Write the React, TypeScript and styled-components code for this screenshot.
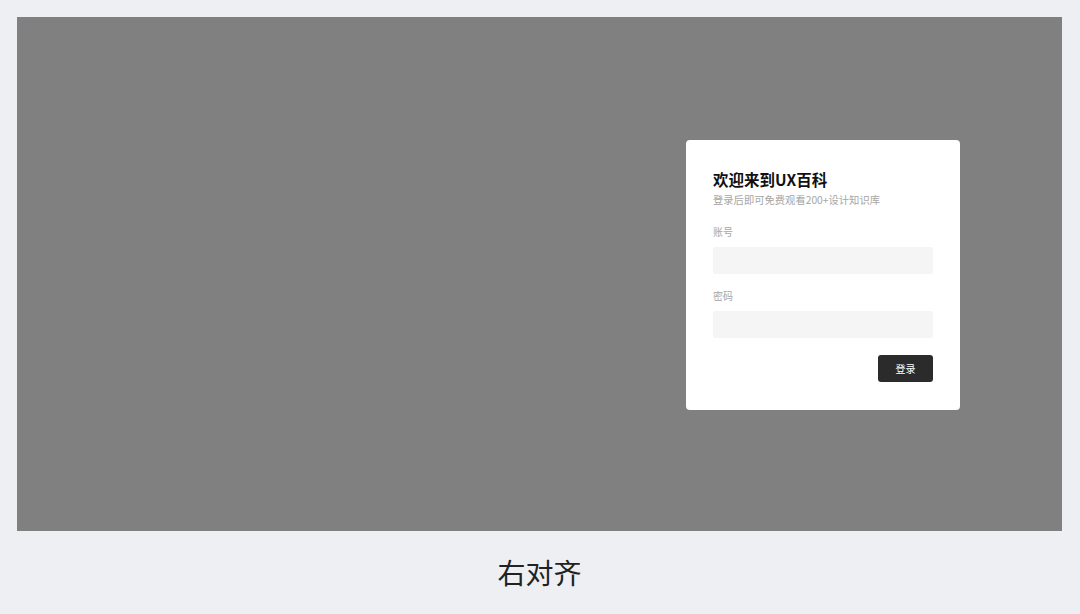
import React from 'react';
import styled, { createGlobalStyle } from 'styled-components';

const GlobalStyle = createGlobalStyle`
  html, body {
    margin: 0;
    padding: 0;
    background: #eeeff3;
    font-family: "Noto Sans CJK SC", "Noto Sans", sans-serif;
  }
`;

const Page = styled.div`
  width: 1080px;
  height: 614px;
  padding: 17px 18px 0 17px;
  box-sizing: border-box;
  display: flex;
  flex-direction: column;
`;

const Stage = styled.div`
  height: 514px;
  background: #808080;
  display: flex;
  align-items: flex-start;
  justify-content: flex-end;
  padding: 123px 102px 0 0;
  box-sizing: border-box;
`;

const Card = styled.div`
  width: 274px;
  height: 270px;
  box-sizing: border-box;
  background: #ffffff;
  border-radius: 4px;
  padding: 28px 27px 28px 27px;
  display: flex;
  flex-direction: column;
`;

const Title = styled.h1`
  margin: 0;
  font-size: 15.5px;
  line-height: 22px;
  font-weight: 700;
  color: #111;
`;

const Subtitle = styled.p`
  margin: 3px 0 0;
  font-size: 10.3px;
  line-height: 14px;
  color: #a6a6a6;
`;

const Field = styled.div<{ $gap: number }>`
  margin-top: ${(p) => p.$gap}px;
  display: flex;
  flex-direction: column;
`;

const Label = styled.label`
  font-size: 10px;
  line-height: 14px;
  color: #a6a6a6;
  margin-bottom: 8px;
`;

const Input = styled.input`
  width: 220px;
  height: 27px;
  box-sizing: border-box;
  border: none;
  outline: none;
  border-radius: 2px;
  background: #f5f5f5;
  padding: 0 8px;
  font: inherit;
  font-size: 10px;
`;

const Actions = styled.div`
  margin-top: 17px;
  display: flex;
  justify-content: flex-end;
`;

const Button = styled.button`
  width: 55px;
  height: 27px;
  border: none;
  border-radius: 3px;
  background: #2b2b2b;
  color: #fff;
  font-family: inherit;
  font-size: 10px;
  padding: 0;
`;

const Caption = styled.div`
  flex: 1;
  display: flex;
  align-items: center;
  justify-content: center;
  font-size: 28px;
  color: #222;
  padding-bottom: 2px;
`;

export default function App() {
  return (
    <>
      <GlobalStyle />
      <Page>
        <Stage>
          <Card>
            <Title>欢迎来到UX百科</Title>
            <Subtitle>登录后即可免费观看200+设计知识库</Subtitle>
            <Field $gap={18}>
              <Label>账号</Label>
              <Input />
            </Field>
            <Field $gap={15}>
              <Label>密码</Label>
              <Input type="password" />
            </Field>
            <Actions>
              <Button>登录</Button>
            </Actions>
          </Card>
        </Stage>
        <Caption>右对齐</Caption>
      </Page>
    </>
  );
}
